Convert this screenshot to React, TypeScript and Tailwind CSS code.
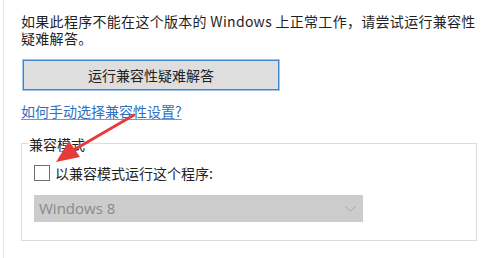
import React from "react";

const font = { fontFamily: '"Noto Sans CJK SC", "Microsoft YaHei", sans-serif' };

export default function App() {
  return (
    <div
      className="relative w-[482px] h-[258px] bg-white overflow-hidden text-[#1f1f1f]"
      style={font}
    >
      <div className="ml-[3px] h-full border-l border-[#e6e6e6] pl-[17px] pt-[13px]">
        <p className="text-[14px] leading-[17px] w-[460px] tracking-[0.3px]">
          如果此程序不能在这个版本的 Windows 上正常工作，请尝试运行兼容性疑难解答。
        </p>
        <div className="mt-[12px] ml-[1px] w-[258px] h-[32px] border border-[#9ec6ee] bg-[#dedede] shadow-[inset_0_0_0_1px_#3f84cc] flex items-center justify-center text-[14px] text-[#222]">
          运行兼容性疑难解答
        </div>
        <div className="mt-[11px] text-[14px] leading-[18px] text-[#2f6fc0] underline underline-offset-[2px] decoration-[#6a9ad6]">
          如何手动选择兼容性设置?
        </div>
        <div className="relative mt-[23px] w-[456px] h-[98px] border border-[#dcdcdc] pl-[12px] pt-[21px]">
          <div className="absolute left-[6px] top-[-8px] bg-white px-[1px] text-[14px] leading-[16px]">
            兼容模式
          </div>
          <div className="flex items-center gap-[5px] h-[16px]">
            <div className="w-[16px] h-[16px] border border-[#6e6e6e] bg-white" />
            <span className="text-[14px] leading-[16px]">以兼容模式运行这个程序:</span>
          </div>
          <div className="mt-[14px] w-[329px] h-[27px] bg-[#cccccc] flex items-center justify-between pl-[5px] pr-[7px]">
            <span className="text-[15px] text-[#8a8a8a]" style={{ fontFamily: '"Open Sans", "Noto Sans", sans-serif' }}>
              Windows 8
            </span>
            <svg width="11" height="6" viewBox="0 0 11 6">
              <path d="M0.5 0.5 L5.5 5 L10.5 0.5" fill="none" stroke="#a8a8a8" strokeWidth="1" />
            </svg>
          </div>
        </div>
      </div>
      <svg className="absolute left-0 top-0 pointer-events-none" width="482" height="258">
        <line x1="134" y1="115" x2="72" y2="151" stroke="#e63b3b" strokeWidth="3" strokeLinecap="round" />
        <polygon points="56,162 69,141 80,157" fill="#e63b3b" />
      </svg>
    </div>
  );
}
